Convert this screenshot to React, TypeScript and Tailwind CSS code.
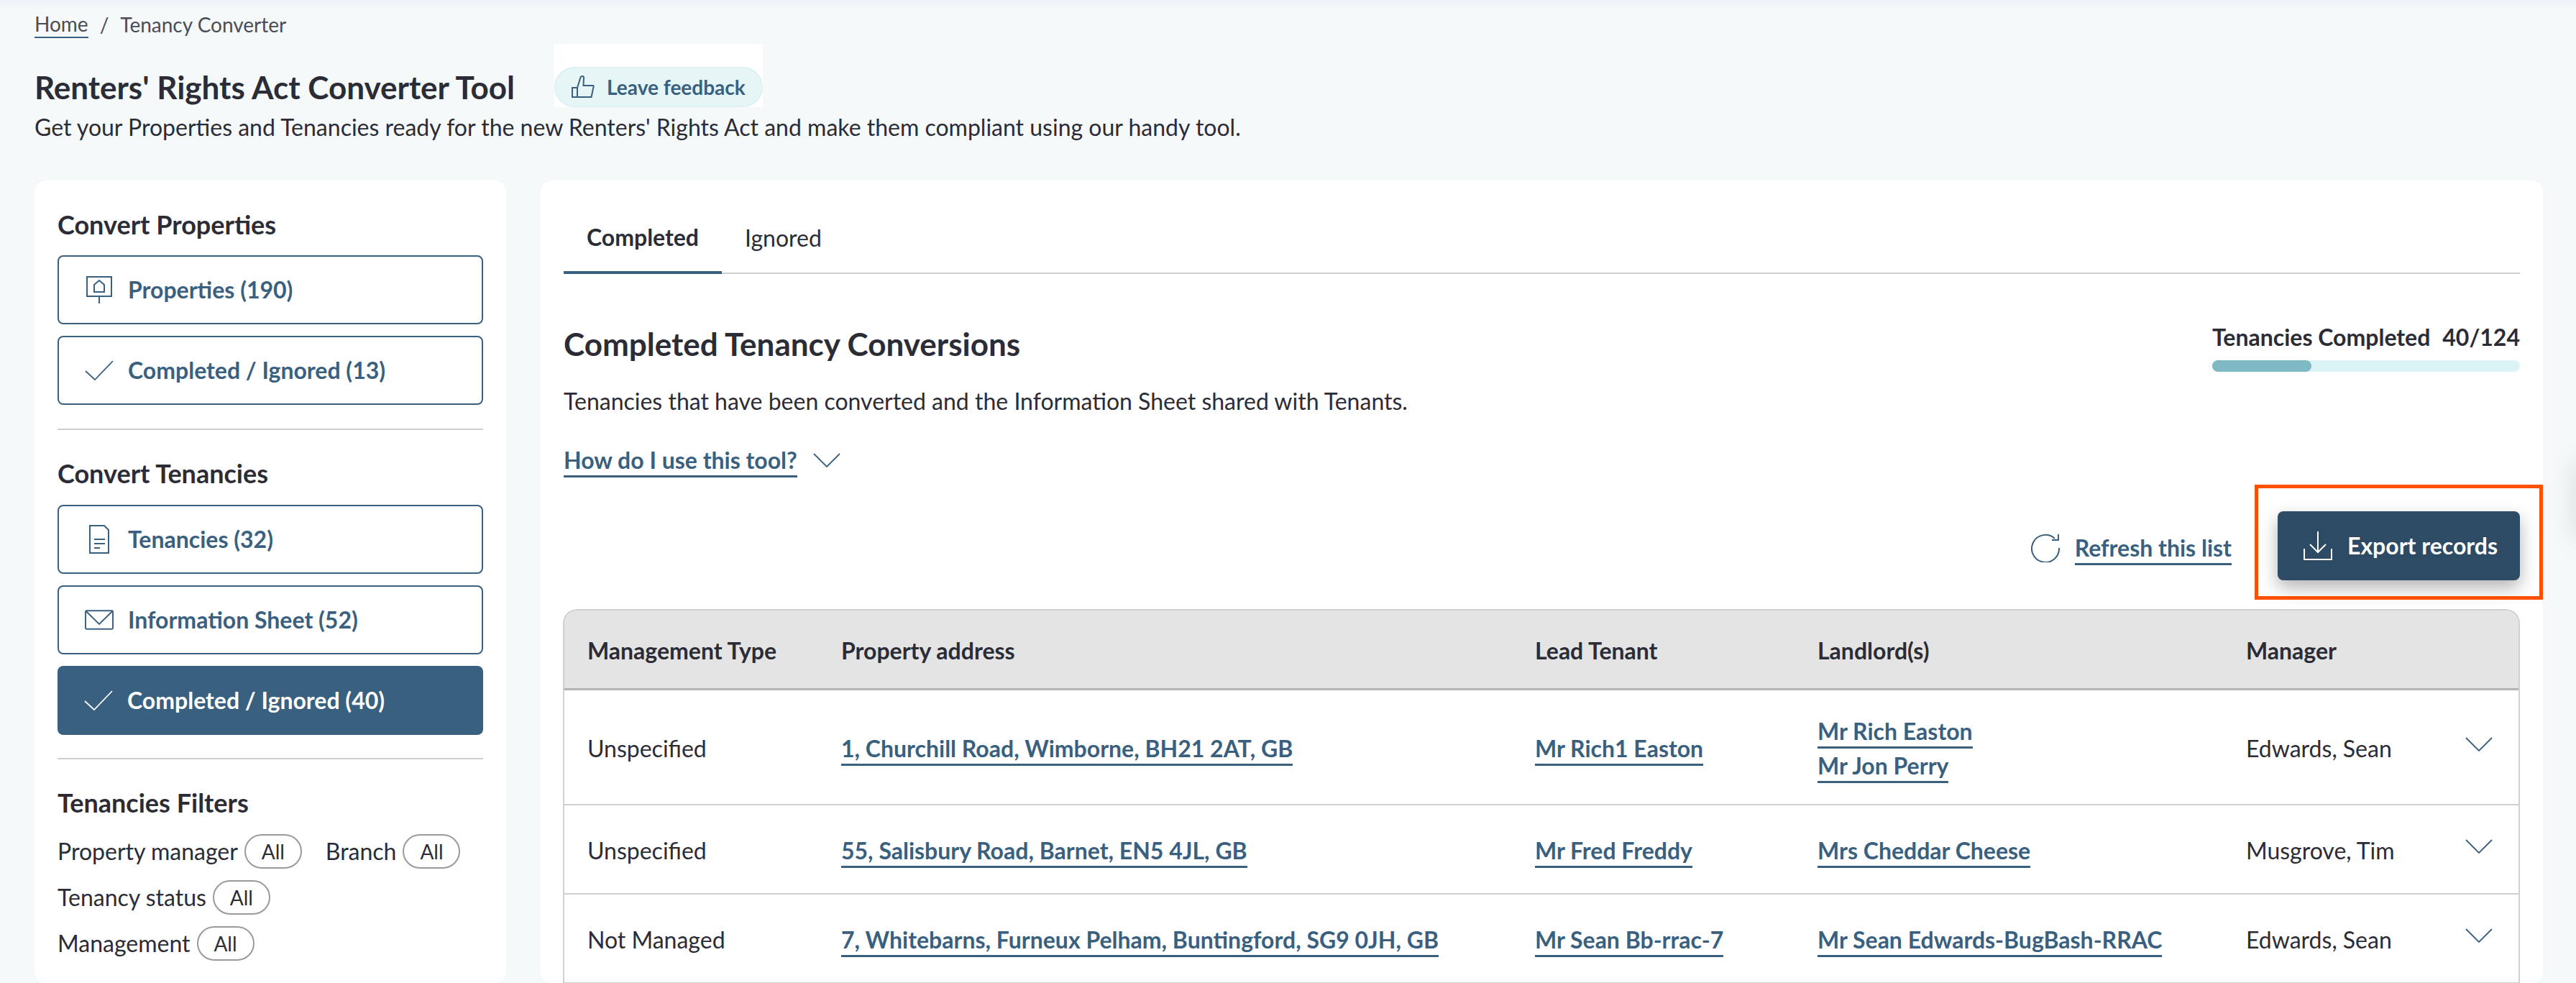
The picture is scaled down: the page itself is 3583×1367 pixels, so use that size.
import React from "react";

const ICON = "#3a6080";

function SignIcon() {
  return (
    <svg width="40" height="40" viewBox="0 0 40 40" fill="none" stroke={ICON} strokeWidth="2">
      <rect x="3" y="2" width="34" height="27" />
      <path d="M20 29v10" />
      <path d="M13 23v-10l7-6 7 6v10z" />
    </svg>
  );
}

function CheckIcon({ color = ICON }: { color?: string }) {
  return (
    <svg width="40" height="28" viewBox="0 0 40 28" fill="none" stroke={color} strokeWidth="1.8">
      <path d="M1 15l13 12L39 1" />
    </svg>
  );
}

function DocIcon() {
  return (
    <svg width="28" height="40" viewBox="0 0 28 40" fill="none" stroke={ICON} strokeWidth="2">
      <path d="M1 1h20l6 6v32H1z" />
      <path d="M7 20h15M7 26h15M7 32h8" />
    </svg>
  );
}

function MailIcon() {
  return (
    <svg width="41" height="28" viewBox="0 0 41 28" fill="none" stroke={ICON} strokeWidth="2">
      <rect x="1" y="1" width="39" height="26" rx="1.5" />
      <path d="M2 2l18.500 18L39 2" />
    </svg>
  );
}

function ChevronIcon() {
  return (
    <svg width="38" height="20" viewBox="0 0 38 20" fill="none" stroke={ICON} strokeWidth="1.8">
      <path d="M1 1l18 18L37 1" />
    </svg>
  );
}

function NavButton({ icon, label, active }: { icon: React.ReactNode; label: string; active?: boolean }) {
  return (
    <div
      className={
        active
          ? "flex h-[96px] items-center rounded-[8px] bg-[#3a6080] pl-[37px] text-[32px] font-bold text-white"
          : "flex h-[96px] items-center rounded-[8px] border-2 border-[#3a6080] bg-white pl-[36px] text-[32px] font-bold text-[#3a6080]"
      }
    >
      <span className="flex w-[40px] justify-center">{icon}</span>
      <span className="ml-[20px]">{label}</span>
    </div>
  );
}

function Filter({ label }: { label: string }) {
  return (
    <span className="flex items-center gap-[9px]">
      <span className="text-[32px] text-[#2b2c36]">{label}</span>
      <span className="flex h-[48px] w-[80px] items-center justify-center rounded-full border-2 border-[#9a9a9a] bg-white text-[28px] text-[#2b2c36]">
        All
      </span>
    </span>
  );
}

function TextLink({ children }: { children: React.ReactNode }) {
  return (
    <span className="inline-block border-b-[3px] border-[#3a6080] pt-[4px] pb-[1px] leading-[40px] font-bold text-[#3a6080]">
      {children}
    </span>
  );
}

const rows = [
  { type: "Unspecified", address: "1, Churchill Road, Wimborne, BH21 2AT, GB", tenant: "Mr Rich1 Easton", landlords: ["Mr Rich Easton", "Mr Jon Perry"], manager: "Edwards, Sean", height: "h-[160px]" },
  { type: "Unspecified", address: "55, Salisbury Road, Barnet, EN5 4JL, GB", tenant: "Mr Fred Freddy", landlords: ["Mrs Cheddar Cheese"], manager: "Musgrove, Tim", height: "h-[124px]" },
  { type: "Not Managed", address: "7, Whitebarns, Furneux Pelham, Buntingford, SG9 0JH, GB", tenant: "Mr Sean Bb-rrac-7", landlords: ["Mr Sean Edwards-BugBash-RRAC"], manager: "Edwards, Sean", height: "h-[124px]" },
];

const cols = "grid grid-cols-[353px_965px_393px_596px_305px_1fr] items-center pt-[4px] pl-[32px]";

export default function App() {
  return (
    <div className="relative h-[1367px] w-[3583px] overflow-hidden bg-[#f5f9fa] font-['Lato',sans-serif] text-[#2b2c36]">
      <div className="absolute inset-x-0 top-0 h-[12px] bg-gradient-to-b from-[#eef2f4] to-transparent" />

      {/* Header */}
      <div className="relative h-[251px] px-[48px] pt-[15px]">
        <div className="flex h-[37px] items-center text-[28px] text-[#4b4c56]">
          <span className="border-b-[2px] border-[#3a6080] leading-[36px]">Home</span>
          <span className="mx-[16px]">/</span>
          <span>Tenancy Converter</span>
        </div>
        <div className="mt-[9px] flex h-[88px] items-end">
          <h1 className="w-[723px] text-[44px] leading-[56px] font-bold">Renters' Rights Act Converter Tool</h1>
          <div className="h-[88px] w-[290px] bg-white pt-[32px]">
            <div className="flex h-[56px] items-center gap-[17px] rounded-full border-2 border-[#dcf1f3] bg-[#e6f6f7] pl-[22px] text-[28px] font-bold text-[#3a6080]">
              <svg width="32" height="32" viewBox="0 0 32 32" fill="none" stroke={ICON} strokeWidth="2">
                <path d="M1 17h7v13H1z" />
                <path d="M8 17l4.500-14.500Q13 1 15 1q2 0 2 2l-.5 11H30q1 .5.5 2l-3 14H8" />
              </svg>
              Leave feedback
            </div>
          </div>
        </div>
        <p className="mt-[6px] text-[32px] leading-[44px]">
          Get your Properties and Tenancies ready for the new Renters' Rights Act and make them compliant using our handy tool.
        </p>
      </div>

      <div className="flex gap-[48px] pr-[47px] pl-[48px]">
        {/* Sidebar */}
        <aside className="h-[1116px] w-[656px] shrink-0 rounded-[16px] bg-white px-[32px] pt-[37px]">
          <h2 className="text-[36px] leading-[48px] font-bold">Convert Properties</h2>
          <div className="mt-[19px] flex flex-col gap-[16px]">
            <NavButton icon={<SignIcon />} label="Properties (190)" />
            <NavButton icon={<CheckIcon />} label="Completed / Ignored (13)" />
          </div>
          <div className="mt-[33px] h-[2px] bg-[#cfcfcf]" />
          <h2 className="mt-[36px] text-[36px] leading-[48px] font-bold">Convert Tenancies</h2>
          <div className="mt-[20px] flex flex-col gap-[16px]">
            <NavButton icon={<DocIcon />} label="Tenancies (32)" />
            <NavButton icon={<MailIcon />} label="Information Sheet (52)" />
            <NavButton icon={<CheckIcon color="#ffffff" />} label="Completed / Ignored (40)" active />
          </div>
          <div className="mt-[32px] h-[2px] bg-[#cfcfcf]" />
          <h2 className="mt-[36px] text-[36px] leading-[48px] font-bold">Tenancies Filters</h2>
          <div className="mt-[20px] flex flex-col gap-[16px]">
            <div className="flex gap-[33px]">
              <Filter label="Property manager" />
              <Filter label="Branch" />
            </div>
            <Filter label="Tenancy status" />
            <Filter label="Management" />
          </div>
        </aside>

        {/* Main card */}
        <main className="relative h-[1116px] flex-1 rounded-[16px] bg-white px-[32px]">
          <div className="flex h-[130px] items-end border-b-2 border-[#cfcfcf]">
            <div className="-mb-[2px] flex h-[84px] w-[220px] items-center justify-center border-b-4 border-[#3a6080] pb-[14px] text-[32px] font-bold">
              Completed
            </div>
            <div className="flex h-[82px] items-center pb-[14px] pl-[32px] text-[32px]">Ignored</div>
          </div>

          <div className="flex items-start justify-between">
            <div>
              <h2 className="mt-[73px] text-[44px] leading-[48px] font-bold">Completed Tenancy Conversions</h2>
              <p className="mt-[36px] text-[32px] leading-[40px]">
                Tenancies that have been converted and the Information Sheet shared with Tenants.
              </p>
              <div className="mt-[38px] flex items-center gap-[22px] text-[32px]">
                <TextLink>How do I use this tool?</TextLink>
                <ChevronIcon />
              </div>
            </div>
            <div className="mt-[68px] w-[428px]">
              <div className="flex justify-between text-[32px] leading-[40px] font-bold">
                <span>Tenancies Completed</span>
                <span>40/124</span>
              </div>
              <div className="mt-[12px] h-[16px] rounded-full bg-[#dbf3f4]">
                <div className="h-full rounded-full bg-[#7fb9c5]" style={{ width: `${(40 / 124) * 100}%` }} />
              </div>
            </div>
          </div>

          <div className="mt-[47px] flex items-center justify-end">
            <div className="mt-[6px] flex items-center gap-[21px] text-[32px]">
              <svg width="40" height="40" viewBox="0 0 40 40" fill="none" stroke={ICON} strokeWidth="2">
                <path d="M33 7a19 19 0 1 0 6 13" />
                <path d="M38 1v8h-9" />
              </svg>
              <TextLink>Refresh this list</TextLink>
            </div>
            <div className="ml-[64px] flex h-[96px] w-[337px] items-center rounded-[8px] bg-[#2d4b64] pl-[36px] text-[32px] font-bold text-white shadow-[0_10px_24px_rgba(0,0,0,0.3)]">
              <svg width="40" height="40" viewBox="0 0 40 40" fill="none" stroke="#fff" strokeWidth="2">
                <path d="M20 0v29M9 18l11 11 11-11" />
                <path d="M1 24v15h38V24" />
              </svg>
              <span className="ml-[21px]">Export records</span>
            </div>
          </div>

          {/* Table */}
          <div className="mt-[40px] -ml-[1px] w-[2722px] overflow-hidden rounded-t-[20px] border-x-2 border-t-2 border-[#cfcfcf] text-[32px]">
            <div className={`${cols} h-[111px] border-b-[3px] border-[#b3b3b3] bg-[#e4e4e4] font-bold`}>
              <span>Management Type</span>
              <span>Property address</span>
              <span>Lead Tenant</span>
              <span>Landlord(s)</span>
              <span>Manager</span>
            </div>
            {rows.map((row) => (
              <div key={row.address} className={`${cols} ${row.height} border-b-2 border-[#cfcfcf]`}>
                <span>{row.type}</span>
                <span><TextLink>{row.address}</TextLink></span>
                <span><TextLink>{row.tenant}</TextLink></span>
                <div className="flex flex-col items-start">
                  {row.landlords.map((name) => (
                    <TextLink key={name}>{name}</TextLink>
                  ))}
                </div>
                <span>{row.manager}</span>
                <span className="-mt-[12px]"><ChevronIcon /></span>
              </div>
            ))}
          </div>

          {/* Review annotation */}
          <div className="absolute top-[423px] right-0 h-[160px] w-[401px] border-[5px] border-[#ff4f00]" />
        </main>
      </div>

      {/* Edge of a floating widget, just off the page */}
      <div className="absolute top-[640px] -right-[24px] h-[110px] w-[24px] rounded-[12px] shadow-[0_0_36px_rgba(0,0,0,0.14)]" />
    </div>
  );
}
